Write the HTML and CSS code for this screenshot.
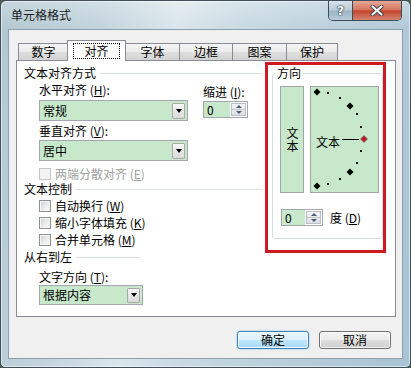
FILE: index.html
```html
<!DOCTYPE html>
<html lang="zh-CN">
<head>
<meta charset="utf-8">
<title>单元格格式</title>
<link rel="stylesheet" href="styles.css">
</head>
<body>
<div class="window">
  <div class="titlebar">
    <span class="title">单元格格式</span>
    <div class="caption-btns">
      <div class="cap help">?</div>
      <div class="cap close">
        <svg width="14" height="11" viewBox="0 0 14 11">
          <path d="M2.5 1.5 L11.5 9.5 M11.5 1.5 L2.5 9.5" stroke="#3b3f48" stroke-width="4" stroke-linecap="round"/>
          <path d="M2.5 1.5 L11.5 9.5 M11.5 1.5 L2.5 9.5" stroke="#ffffff" stroke-width="2.2" stroke-linecap="round"/>
        </svg>
      </div>
    </div>
  </div>
  <div class="client">
    <div class="tabs">
      <div class="tab w50">数字</div>
      <div class="tab active"><span class="focus">对齐</span></div>
      <div class="tab w54">字体</div>
      <div class="tab w53">边框</div>
      <div class="tab w54">图案</div>
      <div class="tab w51">保护</div>
    </div>
    <div class="panel">
      <div class="left">
        <div class="section"><span>文本对齐方式</span><i class="rule"></i></div>
        <div class="align-row">
          <div class="align-col">
            <div class="label">水平对齐 (<u>H</u>):</div>
            <div class="combo wide first"><span>常规</span><i class="drop"></i></div>
            <div class="label gap3">垂直对齐 (<u>V</u>):</div>
            <div class="combo wide second"><span>居中</span><i class="drop"></i></div>
          </div>
          <div class="indent-col">
            <div class="label">缩进 (<u>I</u>):</div>
            <div class="spin indent"><span class="spin-val">0</span><span class="arrows"><i class="up"></i><i class="down"></i></span></div>
          </div>
        </div>
        <div class="check disabled first-check"><i class="box"></i><span>两端分散对齐 (<u>E</u>)</span></div>
        <div class="section"><span>文本控制</span><i class="rule"></i></div>
        <div class="check top1"><i class="box"></i><span>自动换行 (<u>W</u>)</span></div>
        <div class="check"><i class="box"></i><span>缩小字体填充 (<u>K</u>)</span></div>
        <div class="check"><i class="box"></i><span>合并单元格 (<u>M</u>)</span></div>
        <div class="section short"><span>从右到左</span><i class="rule"></i></div>
        <div class="label sub dir-label">文字方向 (<u>T</u>):</div>
        <div class="combo narrow"><span>根据内容</span><i class="drop"></i></div>
      </div>
      <div class="highlight">
        <fieldset class="orient">
          <legend>方向</legend>
          <div class="orient-boxes">
            <div class="vbox"><span class="vtext">文本</span></div>
            <div class="dial">
              <svg class="dial-marks" width="67" height="105" viewBox="0 0 67 105">
                <g fill="#000">
                  <polygon points="6,1.5 9.5,5 6,8.5 2.5,5"/>
                  <polygon points="39,15.5 42.5,19 39,22.5 35.5,19"/>
                  <polygon points="39,81.5 42.5,85 39,88.5 35.5,85"/>
                  <polygon points="6,95.5 9.5,99 6,102.5 2.5,99"/>
                  <rect x="16" y="5" width="2" height="2"/>
                  <rect x="28" y="10" width="2" height="2"/>
                  <rect x="45" y="26" width="2" height="2"/>
                  <rect x="49" y="39" width="2" height="2"/>
                  <rect x="49" y="63" width="2" height="2"/>
                  <rect x="45" y="75" width="2" height="2"/>
                  <rect x="28" y="91" width="2" height="2"/>
                  <rect x="16" y="96" width="2" height="2"/>
                  <rect x="31" y="52" width="17" height="1"/>
                </g>
                <polygon points="53,48.5 56.5,52 53,55.5 49.5,52" fill="#b01f2c" stroke="#7a5a5e" stroke-width="0.5"/>
              </svg>
              <div class="dial-label">文本</div>
            </div>
          </div>
          <div class="degree">
            <div class="spin deg"><span class="spin-val">0</span><span class="arrows"><i class="up"></i><i class="down"></i></span></div>
            <span class="deg-label">度 (<u>D</u>)</span>
          </div>
        </fieldset>
      </div>
    </div>
    <div class="buttons">
      <div class="btn default">确定</div>
      <div class="btn">取消</div>
    </div>
  </div>
</div>
</body>
</html>
```
FILE: styles.css
```css
* { box-sizing: border-box; }
html, body { margin: 0; padding: 0; }
body {
  width: 411px;
  height: 368px;
  overflow: hidden;
  background: #4d5b53;
  font-family: "Noto Sans CJK SC", "Noto Sans", sans-serif;
  font-size: 12px;
  line-height: 14px;
  color: #000;
}
u { text-decoration: underline; text-underline-offset: 1px; }

.window {
  width: 411px;
  height: 368px;
  border: 1px solid #3e4f5b;
  border-radius: 6px 6px 5px 5px;
  padding: 0 7px 8px 7px;
  display: flex;
  flex-direction: column;
  background:
    linear-gradient(to bottom, rgba(255,255,255,0.28), rgba(255,255,255,0) 28px),
    linear-gradient(100deg, #b2c7d1 0%, #c2d3dc 22%, #dae6ec 38%, #c8d9e2 52%, #b9cfdb 72%, #a9c3d4 100%);
  box-shadow: inset 0 0 0 1px rgba(255,255,255,0.55);
}

.titlebar {
  height: 28px;
  flex: none;
  display: flex;
  align-items: flex-start;
}
.title {
  padding: 7px 0 0 3px;
  color: #1b1b1b;
}
.caption-btns {
  margin-left: auto;
  margin-right: 1px;
  display: flex;
  height: 20px;
  border: 1px solid #3d4b57;
  border-top: none;
  border-radius: 0 0 5px 5px;
  overflow: hidden;
}
.cap {
  height: 19px;
  display: flex;
  align-items: center;
  justify-content: center;
}
.help {
  width: 24px;
  border-right: 1px solid #3d4b57;
  background: linear-gradient(to bottom, #d7e2ea 0%, #b9cbd7 48%, #9db4c4 52%, #b8ccd9 100%);
  color: #fff;
  font-family: "DejaVu Sans", sans-serif;
  font-weight: bold;
  font-size: 13px;
  text-shadow: 0 0 1px #2c3a46, 0 0 1px #2c3a46, 0 0 2px #2c3a46;
}
.close {
  width: 48px;
  background: linear-gradient(to bottom, #e9a898 0%, #d5775f 45%, #c4442d 52%, #d3856f 100%);
}

.client {
  flex: 1;
  background: #f0f0f0;
  border: 1px solid #8b9fad;
  display: flex;
  flex-direction: column;
}

.tabs {
  display: flex;
  align-items: flex-end;
  height: 20px;
  margin-top: 10px;
  padding-left: 9px;
}
.tab {
  height: 17px;
  border: 1px solid #898c95;
  border-bottom: none;
  margin-right: -1px;
  background: linear-gradient(to bottom, #f4f4f4 0%, #ebebeb 50%, #dedede 52%, #d2d2d2 100%);
  text-align: center;
  padding-top: 1px;
}
.w50 { width: 51px; }
.w54 { width: 55px; }
.w53 { width: 54px; }
.w51 { width: 52px; }
.tab.active {
  width: 59px;
  height: 21px;
  margin-bottom: -1px;
  margin-left: -1px;
  background: #fff;
  position: relative;
  z-index: 1;
  padding-top: 2px;
}
.focus {
  display: block;
  margin: 0 5px;
  border: 1px dotted #000;
  line-height: 14px;
}

.panel {
  margin-left: 7px;
  width: 380px;
  height: 257px;
  flex: none;
  background: #fff;
  border: 1px solid #898c95;
  display: flex;
  align-items: flex-start;
}

.left {
  width: 248px;
  padding: 5px 2px 0 7px;
}
.section {
  display: flex;
  align-items: center;
  height: 14px;
}
.section .rule {
  flex: 1;
  height: 1px;
  margin-left: 4px;
  background: #d9dfe4;
}
.section.short { width: 116px; margin-top: 2px; }

.label { height: 14px; white-space: nowrap; }
.sub { margin-left: 15px; }

.align-row {
  display: flex;
  margin-top: 3px;
  margin-left: 15px;
}
.gap3 { margin-top: 3px; }

.combo {
  display: flex;
  align-items: center;
  justify-content: space-between;
  border: 1px solid #a3a7ad;
  background: #c7e8ca;
  padding-left: 3px;
  padding-right: 2px;
}
.combo.wide { width: 149px; height: 21px; }
.combo.first { margin-top: 3px; }
.combo.second { margin-top: 2px; }
.combo.narrow { width: 104px; height: 20px; margin-left: 15px; margin-top: 1px; }
.drop {
  width: 13px;
  height: 16px;
  border: 1px solid #a9a9a9;
  border-radius: 1px;
  background: linear-gradient(to bottom, #f6f6f6, #d9d9d9);
  display: flex;
  align-items: center;
  justify-content: center;
}
.combo.narrow .drop { height: 15px; }
.drop::after {
  content: "";
  width: 0;
  height: 0;
  border-left: 3.5px solid transparent;
  border-right: 3.5px solid transparent;
  border-top: 4px solid #000;
}

.indent-col {
  margin-left: 15px;
  margin-top: 2px;
}
.spin {
  display: flex;
  border: 1px solid #a3a7ad;
  background: #fff;
}
.spin.indent { width: 45px; height: 17px; margin-top: 2px; }
.spin-val {
  flex: 1;
  background: #c7e8ca;
  padding-left: 3px;
  line-height: 15px;
}
.arrows {
  width: 15px;
  margin: 1px;
  display: flex;
  flex-direction: column;
  border: 1px solid #b8bfc8;
  background: linear-gradient(to bottom, #f3f3f3, #dcdfe3);
}
.arrows i {
  flex: 1;
  display: flex;
  align-items: center;
  justify-content: center;
}
.arrows .up { border-bottom: 1px solid #c3c8ce; }
.arrows .up::after {
  content: "";
  border-left: 3px solid transparent;
  border-right: 3px solid transparent;
  border-bottom: 3px solid #4a5d7e;
}
.arrows .down::after {
  content: "";
  border-left: 3px solid transparent;
  border-right: 3px solid transparent;
  border-top: 3px solid #4a5d7e;
}

.check {
  display: flex;
  align-items: center;
  height: 17px;
  margin-left: 15px;
  white-space: nowrap;
}
.check .box {
  width: 12px;
  height: 12px;
  flex: none;
  margin-right: 4px;
  border: 1px solid #8e8f8f;
  background: linear-gradient(135deg, #cfd2d6 0%, #eceef0 60%, #fafafa 100%);
  box-shadow: inset 0 0 0 1px #f4f4f4;
}
.check.disabled { color: #a0a0a0; }
.check.disabled .box { border-color: #c6c6c6; background: #f4f4f4; }
.first-check { margin-top: 4px; }
.top1 { margin-top: 1px; }
.dir-label { margin-top: 6px; }

.highlight {
  width: 121px;
  height: 191px;
  margin-top: 1px;
  border: 3px solid #cd1a20;
  padding: 1px 0 0 4px;
}
.orient {
  margin: 0;
  width: 111px;
  min-width: 0;
  padding: 6px 3px 12px 7px;
  border: 1px solid #d3dce2;
  border-radius: 3px;
}
.orient legend {
  padding: 0 2px;
  margin-left: -5px;
  line-height: 14px;
}
.orient-boxes {
  display: flex;
  gap: 6px;
}
.vbox {
  width: 24px;
  height: 107px;
  border: 1px solid #a1a5a9;
  background: #c7e8ca;
  display: flex;
  align-items: center;
  justify-content: center;
}
.vtext {
  writing-mode: vertical-rl;
  text-orientation: upright;
  letter-spacing: 1px;
  line-height: 14px;
}
.dial {
  position: relative;
  width: 69px;
  height: 107px;
  border: 1px solid #a1a5a9;
  background: #c7e8ca;
  padding: 48px 0 0 5px;
}
.dial-marks {
  position: absolute;
  left: 0;
  top: 0;
}
.dial-label { position: relative; }
.degree {
  display: flex;
  align-items: center;
  margin-top: 16px;
}
.spin.deg { width: 42px; height: 17px; margin-left: 1px; }
.deg-label { margin-left: 7px; }

.buttons {
  display: flex;
  justify-content: flex-end;
  gap: 10px;
  margin-top: 14px;
  padding-right: 11px;
}
.btn {
  width: 72px;
  height: 18px;
  border: 1px solid #707070;
  border-radius: 3px;
  background: linear-gradient(to bottom, #f3f3f3 0%, #ebebeb 48%, #dddddd 52%, #cfcfcf 100%);
  box-shadow: inset 0 0 0 1px rgba(255,255,255,0.7);
  text-align: center;
  line-height: 16px;
}
.btn.default {
  border-color: #3c7fb1;
  background: linear-gradient(to bottom, #eaf6fd 0%, #d9f0fc 48%, #bee6fd 52%, #a7d9f5 100%);
  box-shadow: inset 0 0 0 1px rgba(255,255,255,0.8), 0 0 2px #7fc3ea;
}
```
